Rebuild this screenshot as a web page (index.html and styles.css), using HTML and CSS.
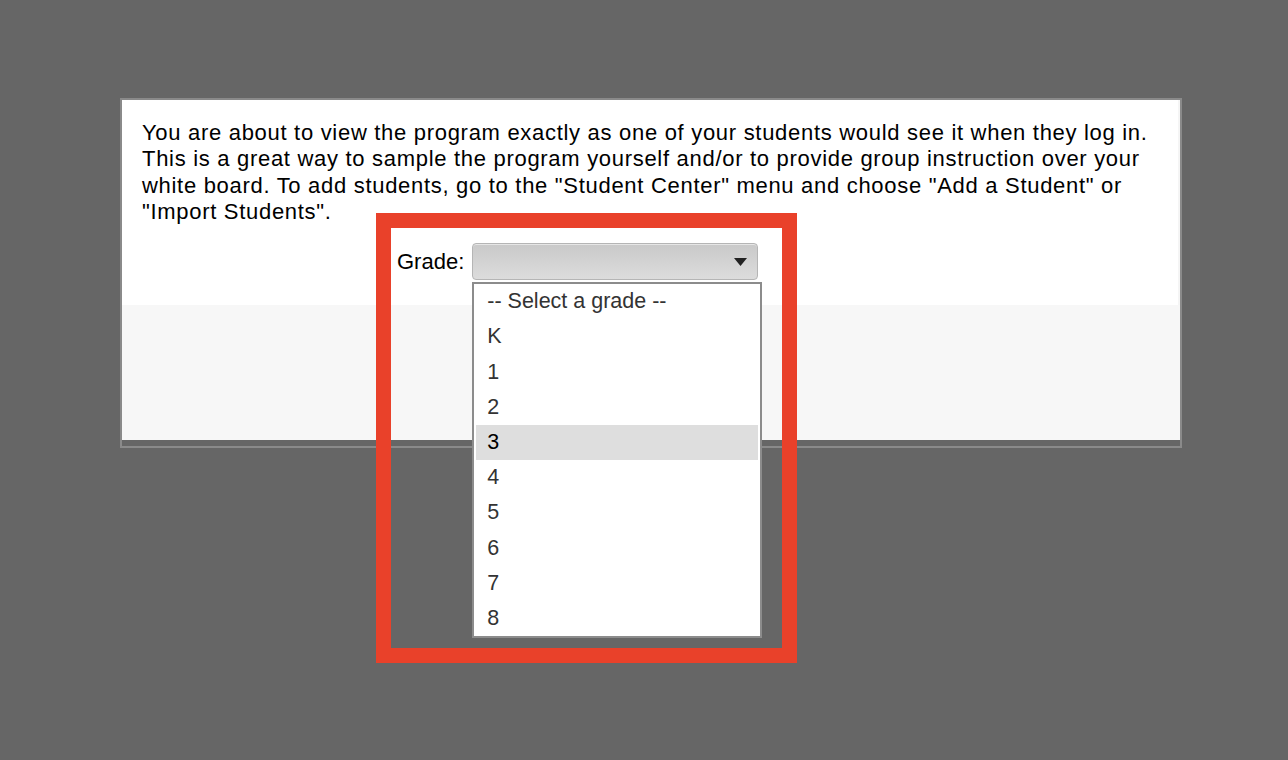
FILE: index.html
```html
<!DOCTYPE html>
<html>
<head>
<meta charset="utf-8">
<link rel="stylesheet" href="styles.css">
</head>
<body>
<div class="dialog">
  <div class="content">
    <p class="intro">You are about to view the program exactly as one of your students would see it when they log in. This is a great way to sample the program yourself and/or to provide group instruction over your white board. To add students, go to the "Student Center" menu and choose "Add a Student" or "Import Students".</p>
    <div class="grade-row">
      <span class="label">Grade:</span>
      <div class="select-wrap">
        <div class="select">
          <svg class="arrow" width="13" height="8" viewBox="0 0 13 8"><path d="M0 0 H13 L6.5 8 Z" fill="#222"/></svg>
        </div>
        <ul class="options">
          <li>-- Select a grade --</li>
          <li>K</li>
          <li>1</li>
          <li>2</li>
          <li class="active">3</li>
          <li>4</li>
          <li>5</li>
          <li>6</li>
          <li>7</li>
          <li>8</li>
        </ul>
      </div>
    </div>
  </div>
  <div class="footer"></div>
  <div class="strip"></div>
</div>
<div class="highlight-frame"></div>
</body>
</html>
```

FILE: styles.css
```css
html, body {
  margin: 0;
  padding: 0;
  background: #666666;
  height: 760px;
  overflow: hidden;
  font-family: "Liberation Sans", Arial, Helvetica, sans-serif;
}
.dialog {
  position: relative;
  margin: 98px 0 0 120px;
  width: 1058px;
  border: 2px solid #8a8a8a;
  background: #666666;
}
.content {
  background: #ffffff;
  border-right: 2px solid #f5f5f5;
  height: 205px;
  padding: 20px 6px 0 20px;
  box-sizing: border-box;
}
.intro {
  margin: 0;
  font-size: 22px;
  letter-spacing: 0.7px;
  line-height: 26.3px;
  color: #000;
}
.grade-row {
  display: flex;
  align-items: center;
  margin: 18px 0 0 255px;
}
.label {
  font-size: 22px;
  color: #000;
  margin-right: 8px;
}
.select-wrap {
  position: relative;
}
.select {
  width: 286px;
  height: 37px;
  box-sizing: border-box;
  border: 1px solid #b5b5b5;
  border-radius: 4px;
  background: linear-gradient(#c9c9c9, #dcdcdc);
  box-shadow: inset 0 1px 0 #e6e6e6;
  display: flex;
  align-items: center;
  justify-content: flex-end;
  padding-right: 10px;
}
.arrow {
  display: block;
  flex: none;
}
.options {
  position: absolute;
  left: 0;
  top: 39px;
  width: 286px;
  margin: 0;
  padding: 0;
  list-style: none;
  border: 2px solid #8c8c8c;
  background: #ffffff;
  z-index: 2;
}
.options li {
  height: 35.2px;
  line-height: 35.2px;
  padding-left: 11px;
  margin: 0 2px;
  font-size: 21.5px;
  color: #333;
}
.options li.active {
  background: #dedede;
  color: #000;
}
.footer {
  background: #f7f7f7;
  height: 135px;
}
.strip {
  height: 6px;
  background: #666666;
}
.highlight-frame {
  position: absolute;
  left: 376px;
  top: 213px;
  width: 391px;
  height: 420px;
  border: 15px solid #e9412a;
  z-index: 3;
  pointer-events: none;
}
```
